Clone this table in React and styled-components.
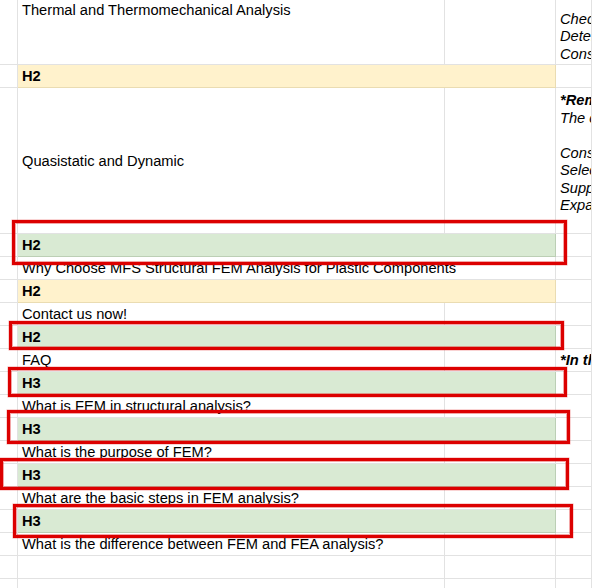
import React from 'react';
import styled, { createGlobalStyle } from 'styled-components';

const GlobalStyle = createGlobalStyle`
  html, body { margin: 0; padding: 0; background: #ffffff; }
  body {
    font-family: "Liberation Sans", Arial, sans-serif;
    overflow: hidden;
  }
`;

const fills = {
  green: { bg: '#d9ead3', line: '#bccfb5' },
  yellow: { bg: '#fff2cc', line: '#eadcb2' },
};

const Viewport = styled.div`
  position: relative;
  width: 592px;
  height: 588px;
  overflow: hidden;
`;

const Sheet = styled.div`
  display: grid;
  grid-template-columns: 18px 427px 111px 1fr;
  grid-template-rows: 109px 23px 146px;
  grid-auto-rows: 23px;
  margin-top: -44px;
  font-size: 14.67px;
  line-height: 17px;
  color: #000000;
`;

const Cell = styled.div`
  box-sizing: border-box;
  min-width: 0;
  grid-column: span ${(p) => p.$span || 1};
  display: flex;
  flex-direction: column;
  justify-content: ${(p) =>
    p.$valign === 'top' ? 'flex-start' : p.$valign === 'bottom' ? 'flex-end' : 'center'};
  padding: ${(p) =>
    p.$valign === 'top' ? '4px 4px 0 4px' : p.$valign === 'bottom' ? '0 4px 1px 4px' : '1px 4px 0 4px'};
  background: ${(p) => (p.$fill ? fills[p.$fill].bg : '#ffffff')};
  border-right: 1px solid ${(p) => (p.$fill ? fills[p.$fill].line : '#e2e2e2')};
  border-bottom: 1px solid ${(p) => (p.$fill ? fills[p.$fill].line : '#e2e2e2')};
  white-space: nowrap;
  overflow: hidden;
`;

const Heading = styled.span`
  font-weight: 700;
`;

const NoteLine = styled.div`
  font-style: italic;
  font-weight: ${(p) => (p.$bold ? 700 : 400)};
  line-height: 17.5px;
  min-height: 17.5px;
`;

const Annotation = styled.div`
  position: absolute;
  box-sizing: border-box;
  left: ${(p) => p.$x}px;
  top: ${(p) => p.$y}px;
  width: ${(p) => p.$w}px;
  height: ${(p) => p.$h}px;
  border: 3px solid #dc0000;
  box-shadow: inset 0 0 0 1px rgba(220, 0, 0, 0.35), 0 0 0 0.5px rgba(220, 0, 0, 0.35);
  pointer-events: none;
`;

const Row = ({ fill, label, text, span, note, noteValign, noteLines }) => {
  if (label) {
    return (
      <>
        <Cell />
        <Cell $fill={fill} $span={2}>
          <Heading>{label}</Heading>
        </Cell>
        <Cell />
      </>
    );
  }
  return (
    <>
      <Cell />
      {span ? (
        <Cell $span={2}>{text}</Cell>
      ) : (
        <>
          <Cell>{text}</Cell>
          <Cell />
        </>
      )}
      <Cell $valign={noteValign}>
        {noteLines &&
          noteLines.map((l, i) => (
            <NoteLine key={i} $bold={l.bold}>
              {l.t || '\u00a0'}
            </NoteLine>
          ))}
      </Cell>
    </>
  );
};

const rows = [
  {
    text: 'Thermal and Thermomechanical Analysis',
    noteValign: 'bottom',
    noteLines: [
      { t: 'Check thermal expansion of the part' },
      { t: 'Determine temperature distribution' },
      { t: 'Consider thermal stresses and warpage' },
    ],
  },
  { fill: 'yellow', label: 'H2' },
  {
    text: 'Quasistatic and Dynamic',
    noteValign: 'top',
    noteLines: [
      { t: '*Remark:', bold: true },
      { t: 'The content should include' },
      { t: '' },
      { t: 'Consider loads and boundary conditions' },
      { t: 'Select the material model' },
      { t: 'Support conditions' },
      { t: 'Expand the analysis' },
    ],
  },
  { fill: 'green', label: 'H2' },
  { text: 'Why Choose MFS Structural FEM Analysis for Plastic Components', span: true },
  { fill: 'yellow', label: 'H2' },
  { text: 'Contact us now!' },
  { fill: 'green', label: 'H2' },
  { text: 'FAQ', noteLines: [{ t: '*In this section', bold: true }] },
  { fill: 'green', label: 'H3' },
  { text: 'What is FEM in structural analysis?' },
  { fill: 'green', label: 'H3' },
  { text: 'What is the purpose of FEM?' },
  { fill: 'green', label: 'H3' },
  { text: 'What are the basic steps in FEM analysis?' },
  { fill: 'green', label: 'H3' },
  { text: 'What is the difference between FEM and FEA analysis?' },
  { text: '' },
  { text: '' },
];

const boxes = [
  { x: 12, y: 220, w: 555, h: 45 },
  { x: 9, y: 321, w: 555, h: 29 },
  { x: 8, y: 367, w: 559, h: 30 },
  { x: 7, y: 410, w: 563, h: 34 },
  { x: 0, y: 458, w: 569, h: 32 },
  { x: 13, y: 504, w: 560, h: 34 },
];

export default function App() {
  return (
    <>
      <GlobalStyle />
      <Viewport>
        <Sheet>
          {rows.map((r, i) => (
            <Row key={i} {...r} />
          ))}
        </Sheet>
        {boxes.map((b, i) => (
          <Annotation key={i} $x={b.x} $y={b.y} $w={b.w} $h={b.h} />
        ))}
      </Viewport>
    </>
  );
}
